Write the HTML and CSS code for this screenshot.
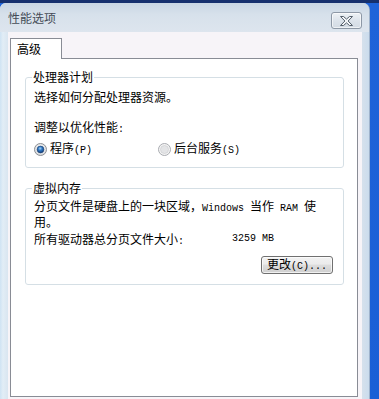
FILE: index.html
```html
<!DOCTYPE html>
<html lang="zh-CN">
<head>
<meta charset="utf-8">
<title>性能选项</title>
<link rel="stylesheet" href="styles.css">
</head>
<body>
<div class="window">
  <div class="titlebar">
    <span class="title">性能选项</span>
    <button class="close" type="button" aria-label="关闭">
      <svg width="15" height="10" viewBox="0 0 15 10"><path d="M1.5 0.5h3l3 2.6 3-2.6h3l-4.4 4.5 4.4 4.5h-3l-3-2.6-3 2.6h-3l4.4-4.5z" fill="#f3f5f8" stroke="#55606c" stroke-width="1" stroke-linejoin="round"/></svg>
    </button>
  </div>
  <div class="client">
    <div class="tabs"><div class="tab">高级</div></div>
    <div class="panel">
      <fieldset class="group g1">
        <legend>处理器计划</legend>
        <p class="line desc">选择如何分配处理器资源。</p>
        <p class="line adjust">调整以优化性能<span class="lat">:</span></p>
        <div class="radios">
          <label class="radio r1">
            <svg class="rb" width="13" height="13" viewBox="0 0 13 13">
              <defs>
                <radialGradient id="rbg" cx="50%" cy="40%" r="60%"><stop offset="0" stop-color="#ffffff"/><stop offset="1" stop-color="#d4d6d9"/></radialGradient>
                <radialGradient id="dot" cx="45%" cy="35%" r="65%"><stop offset="0" stop-color="#a9d4f5"/><stop offset="0.45" stop-color="#2f78c4"/><stop offset="1" stop-color="#0f3c7a"/></radialGradient>
              </defs>
              <circle cx="6.5" cy="6.5" r="6" fill="url(#rbg)" stroke="#8c8f94"/>
              <circle cx="6.5" cy="6.5" r="3.4" fill="url(#dot)" stroke="#1d3f6e" stroke-width="0.6"/>
            </svg>
            <span>程序<span class="lat">(P)</span></span>
          </label>
          <label class="radio r2">
            <svg class="rb" width="13" height="13" viewBox="0 0 13 13">
              <circle cx="6.5" cy="6.5" r="6" fill="#f4f4f4" stroke="#a8abb0"/>
              <circle cx="6.5" cy="6.5" r="4" fill="#e3e4e6" stroke="#c9cbce" stroke-width="0.6"/>
            </svg>
            <span>后台服务<span class="lat">(S)</span></span>
          </label>
        </div>
      </fieldset>
      <fieldset class="group g2">
        <legend>虚拟内存</legend>
        <p class="line para">分页文件是硬盘上的一块区域，<span class="lat">Windows </span>当作<span class="lat"> RAM </span>使<br>用。</p>
        <div class="size"><span class="size-label">所有驱动器总分页文件大小<span class="lat">:</span></span><span class="lat">3259 MB</span></div>
        <div class="actions"><button class="btn" type="button">更改<span class="lat">(C)...</span></button></div>
      </fieldset>
    </div>
  </div>
</div>
</body>
</html>
```
FILE: styles.css
```css
html, body {
  margin: 0;
  padding: 0;
}
body {
  width: 379px;
  height: 399px;
  overflow: hidden;
  background: linear-gradient(#16306e 0, #16306e 3px, #1f63d9 3px, #1a5fd6 100%);
  font-family: "Noto Sans CJK SC", "Noto Sans", sans-serif;
  font-size: 12px;
  color: #000;
}
.lat {
  font-family: "Liberation Mono", "DejaVu Sans Mono", monospace;
  font-size: 10px;
}
.window {
  margin-top: 3px;
  width: 370px;
  height: 396px;
  box-sizing: border-box;
  border-radius: 6px 7px 0 0;
  border-right: 1px solid #9fb3cc;
  background: linear-gradient(90deg, #cfe3f3 0, #e2edf6 3px, #d9e5f0 8px, #d6e1ec 362px, #cbdced 100%);
  display: flex;
  flex-direction: column;
  overflow: hidden;
}
.titlebar {
  height: 29px;
  display: flex;
  align-items: center;
  justify-content: space-between;
  padding: 0 7px 0 8px;
  background: linear-gradient(#c9d6e4 0, #d7e1eb 40%, #dde5ee 100%);
}
.title {
  color: #444c57;
  font-size: 12px;
  line-height: 14px;
  padding-top: 1px;
}
.close {
  width: 31px;
  height: 17px;
  margin-top: 6px;
  padding: 0;
  border: 1px solid #8d98a6;
  border-radius: 3px;
  background: linear-gradient(#eef2f6, #dbe2ea 55%, #d3dbe4);
  display: flex;
  align-items: center;
  justify-content: center;
  box-shadow: inset 0 0 0 1px rgba(255,255,255,0.6);
}
.client {
  flex: 1;
  margin: 0 7px 0 8px;
  padding: 6px 4px 2px 2px;
  background: #f7f4f8;
  display: flex;
  flex-direction: column;
}
.tabs {
  display: flex;
}
.tab {
  position: relative;
  z-index: 1;
  width: 52px;
  height: 21px;
  box-sizing: border-box;
  margin-bottom: -1px;
  padding: 3px 0 0 6px;
  line-height: 14px;
  border: 1px solid #898c95;
  border-bottom: none;
  background: #fff;
}
.panel {
  flex: 1;
  background: #fff;
  border: 1px solid #898c95;
  padding: 0 13px 0 14px;
}
.group {
  margin: 0;
  min-width: 0;
  border: 1px solid #d5dfe5;
  border-radius: 3px;
  padding: 0 10px 0 8px;
}
.group legend {
  padding: 0 1px;
  margin-left: -2px;
  line-height: 12px;
}
.g1 {
  margin-top: 12px;
  padding-bottom: 11px;
}
.g2 {
  margin-top: 14px;
  padding-bottom: 10px;
}
.line {
  margin: 0;
  line-height: 14px;
}
.desc {
  margin-top: 7px;
}
.adjust {
  margin-top: 16px;
}
.radios {
  display: flex;
  margin-top: 5px;
  height: 14px;
}
.radio {
  display: flex;
  align-items: center;
  gap: 3px;
  line-height: 14px;
}
.r1 {
  width: 124px;
}
.rb {
  flex: none;
}
.para {
  margin-top: 5px;
  line-height: 13px;
}
.size {
  display: flex;
  margin-top: 5px;
  line-height: 12px;
}
.size-label {
  width: 198px;
}
.actions {
  display: flex;
  justify-content: flex-end;
  margin-top: 8px;
}
.btn {
  width: 72px;
  height: 18px;
  padding: 0;
  font-family: inherit;
  font-size: 12px;
  line-height: 14px;
  color: #000;
  border: 1px solid #707070;
  border-radius: 3px;
  background: linear-gradient(#f2f2f2 0, #ebebeb 45%, #dddddd 50%, #cfcfcf 100%);
  box-shadow: inset 0 0 0 1px rgba(255,255,255,0.7);
}
```
